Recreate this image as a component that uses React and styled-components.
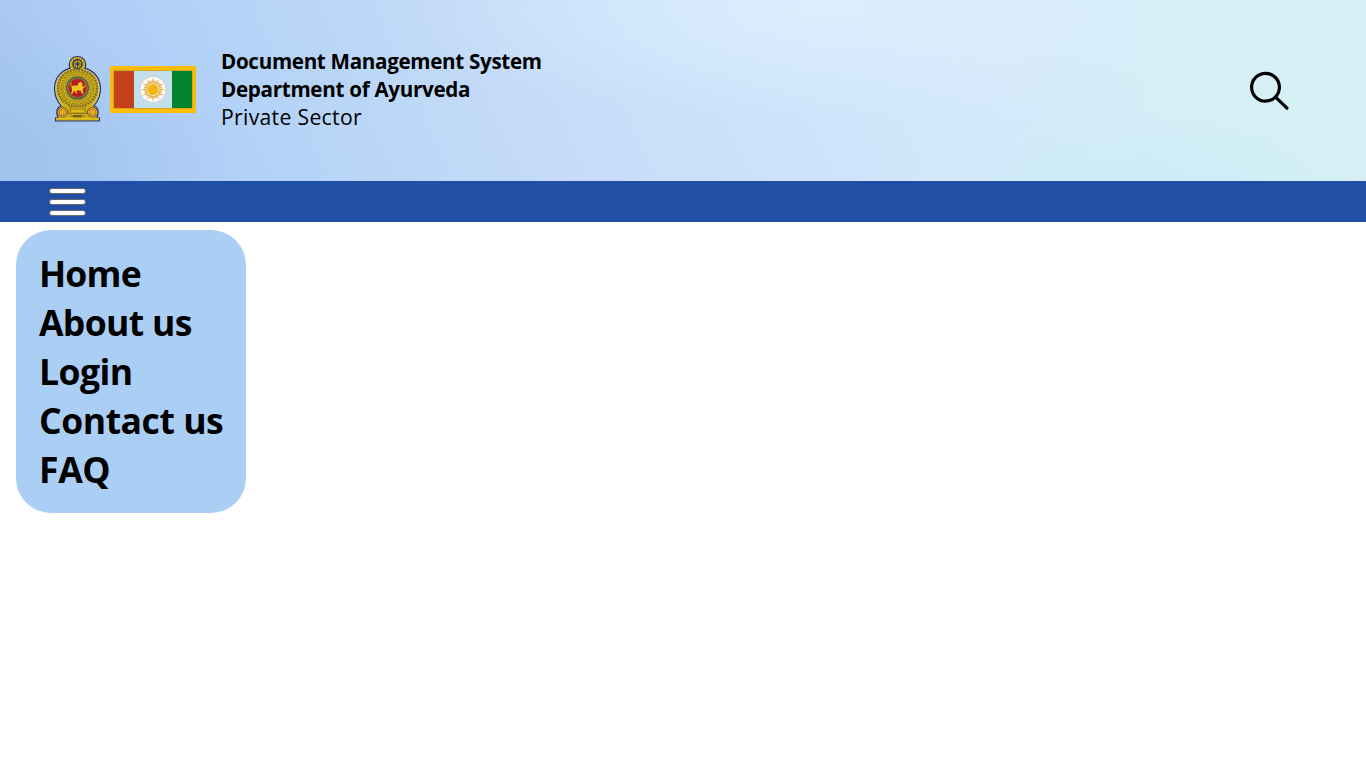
import React from 'react';
import styled, { createGlobalStyle } from 'styled-components';

const GlobalStyle = createGlobalStyle`
  * { box-sizing: border-box; }
  body {
    margin: 0;
    background: #fff;
    color: #000;
    font-family: "Open Sans", "Noto Sans", sans-serif;
  }
`;

const Page = styled.div`
  min-height: 768px;
  overflow: hidden;
`;

const Header = styled.header`
  display: flex;
  align-items: center;
  height: 181px;
  padding: 0 75px 0 52px;
  background:
    radial-gradient(ellipse 240px 70px at 1150px 175px, rgba(202, 237, 246, 0.8), transparent),
    radial-gradient(ellipse 260px 190px at 1320px 110px, rgba(213, 240, 244, 0.7), transparent),
    radial-gradient(ellipse 240px 130px at 0 160px, rgba(155, 193, 236, 0.75), transparent),
    radial-gradient(ellipse 60px 100px at 0 60px, rgba(166, 196, 240, 0.6), transparent),
    radial-gradient(ellipse 420px 110px at 820px 10px, rgba(222, 240, 255, 0.8), transparent),
    linear-gradient(66deg, #a6c8f1 0%, #b0cff7 14%, #b6d4f7 22%, #bdd8f7 30%, #c5dbf8 39%, #cae0fa 49%, #d0e5fb 60%, #d4e9fa 72%, #d6edf8 84%, #daeef6 100%);
`;

const Logos = styled.div`
  display: flex;
  align-items: center;
  gap: 7px;
  width: 169px;
  padding-bottom: 3px;
  flex: none;
`;

const Titles = styled.div`
  display: flex;
  flex-direction: column;
  flex: 1;
  padding-bottom: 3px;
`;

const TitleLine = styled.div`
  font-size: ${(p) => (p.$light ? 21.2 : 20.6)}px;
  line-height: 28px;
  font-weight: ${(p) => (p.$light ? 400 : 700)};
  letter-spacing: ${(p) => p.$track || 0}px;
  white-space: nowrap;
`;

const SearchButton = styled.button`
  display: flex;
  padding: 0;
  border: 0;
  background: none;
`;

const NavBar = styled.nav`
  display: flex;
  align-items: center;
  height: 41px;
  padding-left: 49px;
  background: #224fa6;
`;

const MenuButton = styled.button`
  display: flex;
  flex-direction: column;
  gap: 5px;
  padding: 0;
  border: 0;
  background: none;
`;

const MenuBar = styled.span`
  width: 37px;
  height: 6px;
  border: 1px solid #66676d;
  border-radius: 3px;
  background: #fff;
`;

const Menu = styled.ul`
  display: flex;
  flex-direction: column;
  width: 230px;
  height: 283px;
  margin: 8px 0 0 16px;
  padding: 19px 0 0 23px;
  border-radius: 35px;
  background: #abcef5;
  list-style: none;
`;

const MenuItem = styled.li`
  font-size: 35.6px;
  font-weight: 700;
  line-height: 49px;
  letter-spacing: ${(p) => p.$track || 0}px;
  white-space: nowrap;
`;

const ring = (n, r, cx, cy) =>
  Array.from({ length: n }, (_, i) => {
    const a = (i * 2 * Math.PI) / n;
    return [cx + r * Math.cos(a), cy + r * Math.sin(a), a];
  });

function Emblem() {
  return (
    <svg width="51" height="68" viewBox="0 0 51 68">
      <path
        d="M25.500 1.500c-4.800 0-8.200 3.500-8.200 8 0 1.700.3 2.600.8 3.600C8.500 16 2.500 23.500 2.500 33.500c0 8 3 13.300 6.600 17.300-3 1.200-4.600 4-4.300 7.300.1 1.700.6 3 1.200 4.200L3.500 63v3h44V63L45 62.300c.6-1.200 1.100-2.500 1.200-4.200.3-3.300-1.300-6.100-4.300-7.300 3.600-4 6.600-9.300 6.600-17.300 0-10-6-17.500-15.600-20.400.5-1 .8-1.900.8-3.600 0-4.500-3.400-8-8.200-8Z"
        fill="#d2b010" stroke="#293778" strokeWidth="1.200"
      />
      <path
        d="M18.500 14.300C9.500 17 4 24.200 4 33.500c0 7.200 2.700 12.400 6.500 16.500M32.500 14.300C41.500 17 47 24.200 47 33.500c0 7.200-2.700 12.400-6.500 16.500"
        fill="none" stroke="#c9c9b8" strokeWidth="1"
      />
      <circle cx="25.500" cy="9" r="4.500" fill="#d9b814" stroke="#343a59" strokeWidth="1.500" />
      {ring(8, 4, 25.5, 9).map(([x, y], i) => (
        <path key={i} d={`M25.500 9L${x} ${y}`} stroke="#343a59" strokeWidth=".8" />
      ))}
      <circle cx="25.500" cy="9" r="1.300" fill="#293778" />
      <ellipse cx="25.500" cy="33" rx="19.500" ry="18.500" fill="none" stroke="#746b32" strokeWidth="2.400" strokeDasharray="1.800 1.100" />
      <circle cx="25.500" cy="33" r="16.200" fill="none" stroke="#8b7a22" strokeWidth="1.100" strokeDasharray="3 1" />
      {ring(24, 13.4, 25.5, 33).map(([x, y], i) => (
        <circle key={i} cx={x} cy={y} r="1.300" fill="#e5c41c" stroke="#756a34" strokeWidth=".6" />
      ))}
      <circle cx="25.500" cy="33" r="10.800" fill="#b7a02a" stroke="#426050" strokeWidth="1.400" />
      <circle cx="25.500" cy="33" r="9.400" fill="#b51e22" stroke="#8a6b29" strokeWidth=".7" />
      <path
        d="M18.800 37.800l1.200-1v-2.600l-.6-2.200 1-1.300 5.200-.2.800-2.400 1.800-1 2 .8.300 1.700-.8 1 1.400 1.200 1.500-.6v-1.800h.7v2.600l-2.100.9-.6 3.300 1 1.300v.8h-2l-1-2.900-3.800.1-.5 1.600.9.500v.7h-1.900v-2.400h-1l-1.400 1.700v.8h-2.100Z"
        fill="#f0c71d"
      />
      <path d="M20 31c-2-.7-1.800-2.800-.3-3.300" fill="none" stroke="#f0c71d" strokeWidth=".9" />
      <path d="M17 52h17l-2 4h3v2H16v-2h3Z" fill="#e0bc16" stroke="#806f26" strokeWidth=".7" />
      <path d="M18 54h15M16 58.500h19M18 61h15" stroke="#7c6b1e" strokeWidth=".8" />
      <path d="M21 60h9v2.500h-9Z" fill="#6f6428" />
      {[10.5, 40.5].map((x) => (
        <g key={x}>
          <circle cx={x} cy="57.300" r="5" fill="#f0cb1b" stroke="#363d62" strokeWidth=".8" />
          <circle cx={x} cy="57.300" r="3.500" fill="#e5b01b" stroke="#c2531e" strokeWidth=".8" />
          <path d={`M${x - 1} 59.300v-3l1-1 1 1v3Z`} fill="#e9cf28" stroke="#bb6821" strokeWidth=".4" />
        </g>
      ))}
      <path d="M4 63.500h43" stroke="#e2c21a" strokeWidth="1.400" />
    </svg>
  );
}

function Flag() {
  return (
    <svg width="86" height="47" viewBox="0 0 86 47">
      <path d="M0 0h86v47H0Z" fill="#fbbc0b" />
      <path d="M3.500 4.500h79v38h-79Z" fill="#b3923a" />
      <path d="M4 5h20v37H4Z" fill="#c4421b" />
      <path d="M24 5h38v37H24Z" fill="#c1deea" />
      <path d="M62 5h20v37H62Z" fill="#03832e" />
      <circle cx="43" cy="23.500" r="13" fill="#fff" stroke="#c8c6c2" strokeWidth=".8" />
      {ring(24, 8.2, 43, 23.5).map(([x, y, a], i) => {
        const tip = i % 2 ? 9.6 : 11.4;
        return (
          <path
            key={i}
            d={`M${43 + 6.6 * Math.cos(a - 0.12)} ${23.5 + 6.6 * Math.sin(a - 0.12)}L${43 + tip * Math.cos(a)} ${23.5 + tip * Math.sin(a)}L${43 + 6.6 * Math.cos(a + 0.12)} ${23.5 + 6.6 * Math.sin(a + 0.12)}Z`}
            fill="#dba42a" stroke="#d8a63c" strokeWidth=".4"
          />
        );
      })}
      <circle cx="43" cy="23.500" r="5.400" fill="#f8b50d" stroke="#e2ac2d" strokeWidth=".6" />
    </svg>
  );
}

function SearchIcon() {
  return (
    <svg width="42" height="42" viewBox="0 0 42 42" fill="none" stroke="#000" strokeLinecap="round">
      <circle cx="16.500" cy="17.200" r="13.900" strokeWidth="3.200" />
      <path d="M26.800 27.300L38 38.200" strokeWidth="3.200" />
    </svg>
  );
}

const menuItems = [
  { label: 'Home', track: -0.85 },
  { label: 'About us', track: -0.7 },
  { label: 'Login', track: -0.6 },
  { label: 'Contact us', track: -0.48 },
  { label: 'FAQ', track: -0.4 },
];

export default function App() {
  return (
    <Page>
      <GlobalStyle />
      <Header>
        <Logos>
          <Emblem />
          <Flag />
        </Logos>
        <Titles>
          <TitleLine $track={-0.31}>Document Management System</TitleLine>
          <TitleLine $track={-0.29}>Department of Ayurveda</TitleLine>
          <TitleLine $light $track={0.3}>Private Sector</TitleLine>
        </Titles>
        <SearchButton aria-label="Search">
          <SearchIcon />
        </SearchButton>
      </Header>
      <NavBar>
        <MenuButton aria-label="Menu">
          <MenuBar />
          <MenuBar />
          <MenuBar />
        </MenuButton>
      </NavBar>
      <Menu>
        {menuItems.map((m) => (
          <MenuItem key={m.label} $track={m.track}>{m.label}</MenuItem>
        ))}
      </Menu>
    </Page>
  );
}
